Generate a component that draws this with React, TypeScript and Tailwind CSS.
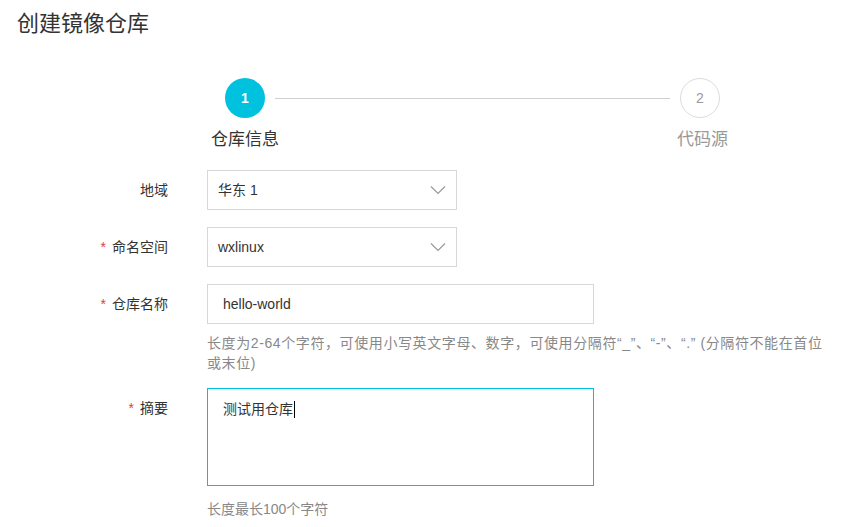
import React from "react";

const font = { fontFamily: '"Liberation Sans", "Noto Sans CJK SC", sans-serif' };

function Chevron() {
  return (
    <svg width="16" height="10" viewBox="0 0 16 10" className="text-[#999]">
      <polyline points="1,1.5 8,8.5 15,1.5" fill="none" stroke="currentColor" strokeWidth="1.2" />
    </svg>
  );
}

function Label({ text, required }: { text: string; required?: boolean }) {
  return (
    <div className="w-[168px] shrink-0 flex justify-end items-center h-[40px] text-[14px] text-[#333]">
      {required && <span className="text-[#e4393c] mr-[6px] text-[14px]">*</span>}
      {text}
    </div>
  );
}

function Select({ value }: { value: string }) {
  return (
    <div className="w-[250px] h-[40px] border border-[#d7d7d7] bg-white flex items-center justify-between pl-[10px] pr-[10px] text-[14px] text-[#333]">
      <span>{value}</span>
      <Chevron />
    </div>
  );
}

export default function App() {
  return (
    <div className="min-h-[527px] bg-white pt-[9px]" style={font}>
      <h1 className="pl-[17px] text-[22px] leading-[30px] text-[#333]">创建镜像仓库</h1>

      {/* Steps */}
      <div className="mt-[39px] ml-[211px] w-[517px]">
        <div className="flex items-center pl-[14px] pr-[8px]">
          <div className="w-[40px] h-[40px] rounded-full bg-[#00c1de] text-white text-[14px] font-bold flex items-center justify-center">
            1
          </div>
          <div className="flex-1 h-px bg-[#d0d0d0] mx-[10px]" />
          <div className="w-[40px] h-[40px] rounded-full border border-[#dcdcdc] text-[#999] text-[14px] flex items-center justify-center">
            2
          </div>
        </div>
        <div className="flex justify-between mt-[9px] text-[17px] leading-[26px]">
          <span className="text-[#333]">仓库信息</span>
          <span className="text-[#999]">代码源</span>
        </div>
      </div>

      {/* Form */}
      <div className="mt-[17px] flex flex-col">
        <div className="flex gap-[39px]">
          <Label text="地域" />
          <Select value="华东 1" />
        </div>

        <div className="flex gap-[39px] mt-[17px]">
          <Label text="命名空间" required />
          <Select value="wxlinux" />
        </div>

        <div className="flex gap-[39px] mt-[17px]">
          <Label text="仓库名称" required />
          <div className="flex flex-col">
            <div className="w-[387px] h-[40px] border border-[#d7d7d7] flex items-center pl-[15px] text-[14px] text-[#333]">
              hello-world
            </div>
            <p className="mt-[9px] w-[640px] text-[14px] leading-[20px] tracking-[0.6px] text-[#888]">
              长度为2-64个字符，可使用小写英文字母、数字，可使用分隔符“_”、“-”、“.” (分隔符不能在首位
              <br />
              或末位)
            </p>
          </div>
        </div>

        <div className="flex gap-[39px] mt-[15px]">
          <div className="w-[168px] shrink-0 flex justify-end items-start pt-[10px] text-[14px] leading-[20px] text-[#333]">
            <span className="text-[#e4393c] mr-[6px]">*</span>
            摘要
          </div>
          <div className="flex flex-col">
            <div className="w-[387px] h-[98px] border border-[#00c1de] pl-[15px] pt-[10px] text-[14px] leading-[20px] text-[#333]">
              测试用仓库
              <span className="inline-block w-px h-[17px] bg-[#000] align-middle ml-[1px] -mt-[2px]" />
            </div>
            <p className="mt-[13px] text-[14px] leading-[20px] text-[#888]">长度最长100个字符</p>
          </div>
        </div>
      </div>
    </div>
  );
}
